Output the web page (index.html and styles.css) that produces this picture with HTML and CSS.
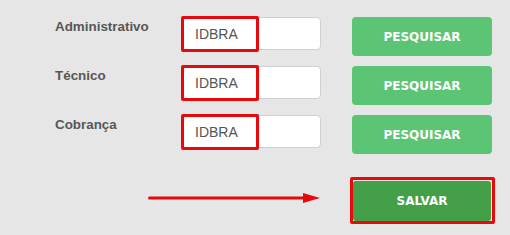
FILE: index.html
```
<!DOCTYPE html>
<html>

<head>
    <title>Cadastro</title>
    <meta charset="utf-8">
    <link rel="stylesheet" href="styles.css">
</head>

<body>
    <div class="form">
        <div class="label">Administrativo</div>
        <div class="field">
            <input class="text-input" type="text" value="IDBRA">
            <span class="mark"></span>
        </div>
        <button class="btn btn-search">PESQUISAR</button>

        <div class="label">Técnico</div>
        <div class="field">
            <input class="text-input" type="text" value="IDBRA">
            <span class="mark"></span>
        </div>
        <button class="btn btn-search">PESQUISAR</button>

        <div class="label">Cobrança</div>
        <div class="field">
            <input class="text-input" type="text" value="IDBRA">
            <span class="mark"></span>
        </div>
        <button class="btn btn-search">PESQUISAR</button>

        <div class="arrow-cell">
            <svg class="arrow" width="172" height="12" viewBox="0 0 172 12">
                <line x1="1.5" y1="6" x2="158" y2="6" stroke="#e8090d" stroke-width="3" stroke-linecap="round"/>
                <polygon points="155,1 172,6 155,11" fill="#e8090d"/>
            </svg>
        </div>
        <div class="save-wrap">
            <button class="btn btn-save">SALVAR</button>
        </div>
    </div>
</body>

</html>
```

FILE: styles.css
```
body {
    background-color: #e6e6e6;
    margin: 0;
    padding: 0;
}

.form {
    display: grid;
    grid-template-columns: 95px 140px 140px;
    align-items: start;
    column-gap: 31px;
    row-gap: 10px;
    padding: 17px 0 0 55px;
}

.label {
    font-family: "Liberation Sans", Arial, sans-serif;
    font-weight: bold;
    font-size: 13.4px;
    color: #575757;
    padding-top: 2px;
}

.field {
    position: relative;
    height: 33px;
}

.text-input {
    display: block;
    box-sizing: border-box;
    width: 140px;
    height: 33px;
    margin: 0;
    border: 1px solid #d0d0d0;
    border-radius: 4px;
    background: #fff;
    padding: 0 0 0 13px;
    font-family: "Liberation Sans", Arial, sans-serif;
    font-size: 14px;
    color: #555;
    outline: none;
}

.mark {
    position: absolute;
    left: 0;
    top: -1px;
    width: 78px;
    height: 36px;
    box-sizing: border-box;
    border: 3px solid #e8090d;
    border-radius: 2px;
    pointer-events: none;
}

.btn {
    display: block;
    border: none;
    border-radius: 4px;
    color: #fff;
    font-family: "DejaVu Sans", sans-serif;
    font-weight: bold;
    font-size: 12px;
    padding: 0;
    margin: 0;
}

.btn-search {
    background-color: #5cc575;
    height: 39px;
    width: 140px;
}

.arrow-cell {
    grid-column: 1 / 3;
    justify-self: end;
    margin-top: 28px;
    margin-right: 1px;
}

.arrow {
    display: block;
}

.save-wrap {
    margin-top: 13px;
    margin-left: -2px;
    width: 145px;
    height: 47px;
    box-sizing: border-box;
    border: 3px solid #e8090d;
    border-radius: 2px;
    padding: 1px 1px 0 0;
}

.btn-save {
    background-color: #449f49;
    width: 138px;
    height: 40px;
    border-radius: 3px;
}
```
